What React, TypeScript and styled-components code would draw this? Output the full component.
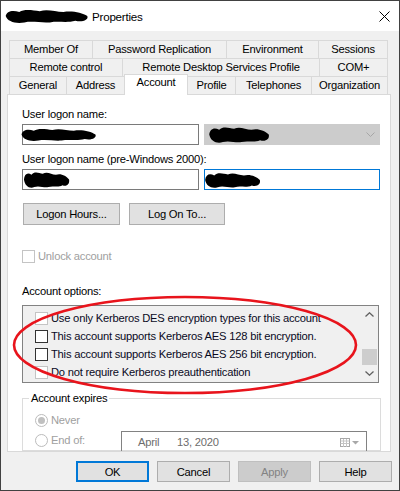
import React from "react";
import styled, { createGlobalStyle } from "styled-components";

const GlobalStyle = createGlobalStyle`
  html, body {
    margin: 0;
    padding: 0;
    background: #fff;
  }
  body {
    font-family: "Liberation Sans", Arial, sans-serif;
    font-size: 11.2px;
    letter-spacing: -0.22px;
    color: #000;
  }
`;

const Window = styled.div`
  position: relative;
  width: 400px;
  height: 491px;
  box-sizing: border-box;
  border: 1px solid #414141;
  display: flex;
  flex-direction: column;
  background: #f0f0f0;
  overflow: hidden;
`;

const TitleBar = styled.div`
  height: 30px;
  background: #fff;
  display: flex;
  align-items: center;
  padding-left: 3px;
`;

const TitleText = styled.span`
  margin-left: 3px;
  font-size: 11.6px;
`;

const CloseBtn = styled.svg`
  margin-left: auto;
  margin-right: 9px;
`;

const Body = styled.div`
  flex: 1;
  display: flex;
  flex-direction: column;
  padding: 9px 8px 0 6px;
`;

const TabStrip = styled.div`
  margin: 0 3px 0 2px;
  display: flex;
  flex-direction: column;
`;

const TabRow = styled.div`
  display: flex;
  align-items: flex-start;
  height: 18px;
`;

const Tab = styled.div<{ w: number; active?: boolean }>`
  box-sizing: border-box;
  width: ${(p) => p.w}px;
  height: ${(p) => (p.active ? 21 : 18)}px;
  margin-top: ${(p) => (p.active ? -2 : 0)}px;
  margin-right: ${(p) => (p.active ? -1 : 0)}px;
  border: 1px solid #d9d9d9;
  border-right: ${(p) => (p.active ? "1px solid #d9d9d9" : "none")};
  border-bottom: none;
  background: ${(p) => (p.active ? "#fff" : "#f0f0f0")};
  position: ${(p) => (p.active ? "relative" : "static")};
  z-index: ${(p) => (p.active ? 2 : "auto")};
  text-align: center;
  line-height: ${(p) => (p.active ? 15 : 17)}px;
  white-space: nowrap;

  &:last-child {
    border-right: 1px solid #d9d9d9;
  }
`;

const TabPage = styled.div`
  height: 358px;
  box-sizing: border-box;
  background: #fff;
  border: 1px solid #d9d9d9;
  padding: 12px 10px 0 14px;
  overflow: hidden;
  display: flex;
  flex-direction: column;
`;

const Label = styled.div<{ top?: number; muted?: boolean }>`
  line-height: 15px;
  margin-top: ${(p) => p.top ?? 0}px;
  color: ${(p) => (p.muted ? "#a0a0a0" : "#000")};
`;

const FieldRow = styled.div`
  display: flex;
  gap: 5px;
  margin-top: 2px;
`;

const TextBox = styled.div<{ focused?: boolean; disabled?: boolean }>`
  box-sizing: border-box;
  width: 177px;
  height: 21px;
  display: flex;
  align-items: center;
  background: ${(p) => (p.disabled ? "#cccccc" : "#fff")};
  border: 1px solid
    ${(p) => (p.focused ? "#0078d7" : p.disabled ? "#cccccc" : "#7a7a7a")};
`;

const Chevron = styled.svg`
  margin-left: auto;
  margin-right: 4px;
`;

const ButtonRow = styled.div`
  display: flex;
  gap: 9px;
  margin: 13px 0 0 1px;
`;

const Button = styled.div<{ w: number; primary?: boolean; disabled?: boolean }>`
  box-sizing: border-box;
  width: ${(p) => p.w}px;
  height: ${(p) => (p.primary !== undefined ? 21 : 22)}px;
  display: flex;
  align-items: center;
  justify-content: center;
  background: ${(p) => (p.disabled ? "#cccccc" : "#e1e1e1")};
  border: ${(p) =>
    p.primary ? "2px solid #0078d7" : p.disabled ? "1px solid #bfbfbf" : "1px solid #adadad"};
  color: ${(p) => (p.disabled ? "#838383" : "#000")};
`;

const CheckRow = styled.div<{ top?: number }>`
  display: flex;
  align-items: center;
  height: 15px;
  margin-top: ${(p) => p.top ?? 0}px;
`;

const CheckBox = styled.div<{ faded?: boolean }>`
  box-sizing: border-box;
  width: 13px;
  height: 13px;
  background: #fff;
  border: 1px solid ${(p) => (p.faded ? "#c4c4c4" : "#333")};
  margin-right: 3px;
  flex: none;
`;

const ListBox = styled.div`
  box-sizing: border-box;
  width: 357px;
  height: 79px;
  margin-top: 6px;
  border: 1px solid #828282;
  background: #f0f0f0;
  display: flex;
`;

const ListItems = styled.div`
  flex: 1;
  padding: 3px 0 0 12px;
  overflow: hidden;
`;

const ListRow = styled.div`
  height: 18px;
  display: flex;
  align-items: center;
  white-space: nowrap;
  color: #0a0a1e;
`;

const ScrollBar = styled.div`
  width: 17px;
  display: flex;
  flex-direction: column;
`;

const ScrollArrow = styled.div`
  height: 17px;
  display: flex;
  align-items: center;
  justify-content: center;
`;

const ScrollTrack = styled.div`
  flex: 1;
  padding: 26px 1px 0 1px;
`;

const Thumb = styled.div`
  height: 16px;
  background: #cdcdcd;
`;

const GroupBox = styled.fieldset`
  box-sizing: border-box;
  width: 359px;
  margin: 8px 0 0 0;
  padding: 4px 0 0 12px;
  border: 1px solid #dcdcdc;
  min-width: 0;
`;

const Legend = styled.legend`
  padding: 0 2px;
  margin-left: -6px;
  line-height: 15px;
`;

const RadioRow = styled.div`
  display: flex;
  align-items: center;
  height: 20px;
  color: #a0a0a0;
`;

const Radio = styled.div<{ checked?: boolean }>`
  box-sizing: border-box;
  width: 13px;
  height: 13px;
  border-radius: 50%;
  border: 1px solid #bcbcbc;
  background: #fff;
  margin-right: 3px;
  display: flex;
  align-items: center;
  justify-content: center;

  &::after {
    content: "";
    width: 7px;
    height: 7px;
    border-radius: 50%;
    background: ${(p) => (p.checked ? "#c0c0c0" : "transparent")};
  }
`;

const DatePicker = styled.div`
  box-sizing: border-box;
  margin-left: auto;
  margin-right: 13px;
  align-self: flex-start;
  margin-top: 1px;
  width: 246px;
  height: 22px;
  border: 1px solid #828282;
  display: flex;
  align-items: center;
  padding: 0 7px 0 16px;
  color: #6d6d6d;
  flex: none;
`;

const Month = styled.span`
  width: 39px;
`;

const CalIcon = styled.svg`
  margin-left: auto;
`;

const DialogButtons = styled.div`
  display: flex;
  justify-content: flex-end;
  gap: 8px;
  margin: 9px -1px 0 0;
`;

const Annotation = styled.svg`
  position: absolute;
  left: 9px;
  top: 292px;
  pointer-events: none;
`;

const Redacted: React.FC<{ w: number; h: number; shift?: number }> = ({ w, h, shift = 0 }) => (
  <svg width={w} height={h} viewBox="0 0 100 20" preserveAspectRatio="none" style={{ marginLeft: shift, flex: "none" }}>
    <path
      d="M2,10 C3,4 10,2 18,5 C24,1 34,3 42,4 C52,1 60,5 70,5 C80,3 92,6 98,10 C100,15 92,18 84,16 C74,19 64,16 54,18 C44,19 34,16 24,18 C14,20 4,17 2,10 Z"
      fill="#000"
    />
  </svg>
);

const rows = [
  [
    ["Member Of", 83],
    ["Password Replication", 134],
    ["Environment", 92],
    ["Sessions", 70],
  ],
  [
    ["Remote control", 113],
    ["Remote Desktop Services Profile", 197],
    ["COM+", 69],
  ],
  [
    ["General", 57],
    ["Address", 58],
    ["Account", 64],
    ["Profile", 48],
    ["Telephones", 76],
    ["Organization", 77],
  ],
] as const;

const options = [
  { text: "Use only Kerberos DES encryption types for this account", faded: true },
  { text: "This account supports Kerberos AES 128 bit encryption.", faded: false },
  { text: "This account supports Kerberos AES 256 bit encryption.", faded: false },
  { text: "Do not require Kerberos preauthentication", faded: true },
];

export default function App() {
  return (
    <>
      <GlobalStyle />
      <Window>
        <TitleBar>
          <Redacted w={85} h={16} />
          <TitleText>Properties</TitleText>
          <CloseBtn width="11" height="11" viewBox="0 0 11 11">
            <path d="M0.5,0.5 L10.5,10.5 M10.5,0.5 L0.5,10.5" stroke="#000" strokeWidth="1" />
          </CloseBtn>
        </TitleBar>
        <Body>
          <TabStrip>
            {rows.map((row, i) => (
              <TabRow key={i}>
                {row.map(([name, w]) => (
                  <Tab key={name} w={w} active={name === "Account"}>
                    {name}
                  </Tab>
                ))}
              </TabRow>
            ))}
          </TabStrip>
          <TabPage>
            <Label>User logon name:</Label>
            <FieldRow>
              <TextBox>
                <Redacted w={77} h={15} shift={-3} />
              </TextBox>
              <TextBox disabled>
                <Redacted w={62} h={19} shift={3} />
                <Chevron width="9" height="5" viewBox="0 0 9 5">
                  <path d="M0.5,0.5 L4.5,4.5 L8.5,0.5" stroke="#a6a6a6" fill="none" />
                </Chevron>
              </TextBox>
            </FieldRow>
            <Label top={7}>User logon name (pre-Windows 2000):</Label>
            <FieldRow>
              <TextBox>
                <Redacted w={47} h={19} />
              </TextBox>
              <TextBox focused>
                <Redacted w={57} h={18} shift={-1} />
              </TextBox>
            </FieldRow>
            <ButtonRow>
              <Button w={97}>Logon Hours...</Button>
              <Button w={96}>Log On To...</Button>
            </ButtonRow>
            <CheckRow top={24}>
              <CheckBox faded />
              <Label muted>Unlock account</Label>
            </CheckRow>
            <Label top={20}>Account options:</Label>
            <ListBox>
              <ListItems>
                {options.map((o) => (
                  <ListRow key={o.text}>
                    <CheckBox faded={o.faded} />
                    {o.text}
                  </ListRow>
                ))}
              </ListItems>
              <ScrollBar>
                <ScrollArrow>
                  <svg width="9" height="5" viewBox="0 0 9 5">
                    <path d="M0.5,4.5 L4.5,0.8 L8.5,4.5" stroke="#606060" strokeWidth="1.3" fill="none" />
                  </svg>
                </ScrollArrow>
                <ScrollTrack>
                  <Thumb />
                </ScrollTrack>
                <ScrollArrow>
                  <svg width="9" height="5" viewBox="0 0 9 5">
                    <path d="M0.5,0.5 L4.5,4.2 L8.5,0.5" stroke="#606060" strokeWidth="1.3" fill="none" />
                  </svg>
                </ScrollArrow>
              </ScrollBar>
            </ListBox>
            <GroupBox>
              <Legend>Account expires</Legend>
              <RadioRow>
                <Radio checked />
                Never
              </RadioRow>
              <RadioRow>
                <Radio />
                End of:
                <DatePicker>
                  <Month>April</Month>
                  <span>13, 2020</span>
                  <CalIcon width="19" height="9" viewBox="0 0 19 9">
                    <rect x="0.5" y="0.5" width="9" height="8" fill="#fff" stroke="#a8a8a8" />
                    <path d="M0.5,3 H9.5 M0.5,5.5 H9.5 M3.5,1 V9 M6.5,1 V9" stroke="#c4c4c4" />
                    <path d="M12,3 L19,3 L15.5,6.5 Z" fill="#a8a8a8" />
                  </CalIcon>
                </DatePicker>
              </RadioRow>
            </GroupBox>
          </TabPage>
          <DialogButtons>
            <Button w={73} primary>OK</Button>
            <Button w={73} primary={false}>Cancel</Button>
            <Button w={73} primary={false} disabled>Apply</Button>
            <Button w={73} primary={false}>Help</Button>
          </DialogButtons>
        </Body>
        <Annotation width="352" height="104" viewBox="0 0 352 104">
          <ellipse cx="175" cy="52" rx="171" ry="48" fill="none" stroke="#e8141c" strokeWidth="2.6" />
        </Annotation>
      </Window>
    </>
  );
}
